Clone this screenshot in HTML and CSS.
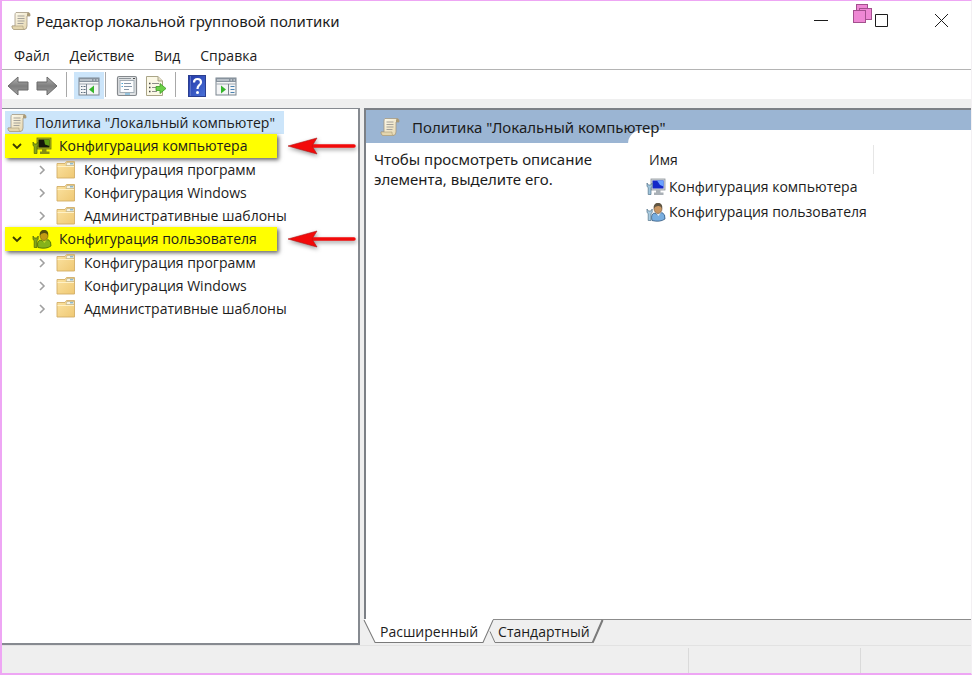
FILE: index.html
```
<!DOCTYPE html>
<html lang="ru">

<head>
    <meta charset="UTF-8">
    <title>Редактор локальной групповой политики</title>
    <link rel="stylesheet" href="styles.css">
</head>

<body>
    <!-- shared icons -->
    <svg class="sprite" aria-hidden="true">
        <defs>
            <linearGradient id="paper" x1="0" y1="0" x2="1" y2="1">
                <stop offset="0" stop-color="#fffdf2" />
                <stop offset="1" stop-color="#e3d3a8" />
            </linearGradient>
            <linearGradient id="gold" x1="0" y1="0" x2="1" y2="1">
                <stop offset="0" stop-color="#fbe3a2" />
                <stop offset="1" stop-color="#efc873" />
            </linearGradient>
            <linearGradient id="metal" x1="0" y1="0" x2="0" y2="1">
                <stop offset="0" stop-color="#b4b4b4" />
                <stop offset="0.5" stop-color="#7e7e7e" />
                <stop offset="1" stop-color="#a2a2a2" />
            </linearGradient>
            <linearGradient id="help" x1="0" y1="0" x2="1" y2="1">
                <stop offset="0" stop-color="#2338a8" />
                <stop offset="1" stop-color="#4a72d8" />
            </linearGradient>
        </defs>
        <symbol id="scroll" viewBox="0 0 20 20">
            <path d="M5 1.500H17.500Q19.500 2 19 5H16V15Q16 18.500 13 18.500H3Q1 18 1 15H4V4Q4 2 5 1.500Z" fill="url(#paper)" stroke="#a39880" stroke-width="0.800" />
            <path d="M16 5V3Q16.500 1.500 17.800 1.600Q19.400 2.300 19 5Z" fill="#a99a78" />
            <path d="M1 15H12Q11.500 18 13.500 18.500H3Q1 18 1 15Z" fill="#e4d6ae" stroke="#a89a78" stroke-width="0.600" />
            <path d="M6.500 5H13.500M6.500 7.500H13.500M6.500 10H13.500M6.500 12.500H12.500" stroke="#a5a29a" />
        </symbol>
        <symbol id="folder" viewBox="0 0 20 18">
            <path d="M1 2.500H9L10.500 0.500H18.500V17H1Z" fill="url(#gold)" stroke="#d2ae66" stroke-width="0.900" />
            <path d="M11 1.500H18V4.500H10Z" fill="#f7f3e4" stroke="#b9ab80" stroke-width="0.600" />
            <path d="M14 2.800H17" stroke="#5f9fc4" />
            <path d="M1.500 5.500H18" stroke="#fff1c6" />
        </symbol>
        <symbol id="computer" viewBox="0 0 20 18">
            <rect x="5" y="1" width="14" height="11" fill="#d6d9dc" stroke="#8b9298" stroke-width="0.800" />
            <rect x="6.500" y="2.500" width="11" height="8" fill="#1428c8" />
            <path d="M11 2.500H17.500V8.500L14 7Z" fill="#6aa2ff" />
            <path d="M10 12H14.500V14.500H17.500V17H8V14.500H10Z" fill="#a9b0b6" />
            <path d="M1 5V8.500L2.200 9.500V16.500H5V9.500L6.200 8.500V5L4.800 7H2.400Z" fill="#9fc4dc" stroke="#54748a" stroke-width="0.700" />
        </symbol>
        <symbol id="user" viewBox="0 0 20 20">
            <path d="M6 18.500Q4.500 12.500 8 11L12 12.500L16 10.500Q19.500 12 19 17Q14 20.500 6 18.500Z" fill="#78aee0" stroke="#35597e" stroke-width="0.800" />
            <path d="M9 10L12.500 14L15.500 10Z" fill="#e8f1f8" />
            <ellipse cx="12" cy="6.500" rx="4" ry="5" fill="#c99763" stroke="#6c4d30" stroke-width="0.600" />
            <path d="M7.800 6.500Q7.200 1 12 1Q17 1 16 6.500Q15.300 3.900 12.500 4Q9 3.800 7.800 6.500Z" fill="#5f5543" />
            <path d="M1 7V10.500L2.200 11.500V18.500H5V11.500L6.200 10.500V7L4.800 9H2.400Z" fill="#a9cbe0" stroke="#54748a" stroke-width="0.700" />
        </symbol>
        <symbol id="computer-green" viewBox="0 0 20 18">
            <rect x="5" y="1" width="14" height="11" fill="#a9b21b" stroke="#6d7410" stroke-width="0.800" />
            <rect x="6.500" y="2.500" width="11" height="8" fill="#14180a" />
            <path d="M12 2.500H17.500V9L13 7.500Z" fill="#5d9c12" />
            <path d="M10 12H14.500V14.500H17.500V17H8V14.500H10Z" fill="#858d12" />
            <path d="M1 5V8.500L2.200 9.500V16.500H5V9.500L6.200 8.500V5L4.800 7H2.400Z" fill="#84a51a" stroke="#4c6408" stroke-width="0.700" />
        </symbol>
        <symbol id="user-green" viewBox="0 0 20 20">
            <path d="M6 18.500Q4.500 12.500 8 11L12 12.500L16 10.500Q19.500 12 19 17Q14 20.500 6 18.500Z" fill="#85b21b" stroke="#476508" stroke-width="0.800" />
            <path d="M9 10L12.500 14L15.500 10Z" fill="#c6dc2a" />
            <ellipse cx="12" cy="6.500" rx="4" ry="5" fill="#c29a14" stroke="#66560a" stroke-width="0.600" />
            <path d="M7.800 6.500Q7.200 1 12 1Q17 1 16 6.500Q15.300 3.900 12.500 4Q9 3.800 7.800 6.500Z" fill="#55500c" />
            <path d="M1 7V10.500L2.200 11.500V18.500H5V11.500L6.200 10.500V7L4.800 9H2.400Z" fill="#84a51a" stroke="#4c6408" stroke-width="0.700" />
        </symbol>
        <symbol id="chevron" viewBox="0 0 10 10">
            <path d="M3 1L7 5L3 9" fill="none" stroke="#a0a0a0" stroke-width="1.600" />
        </symbol>
        <symbol id="chevron-down" viewBox="0 0 10 10">
            <path d="M1 3L5 7L9 3" fill="none" stroke="#3c3c00" stroke-width="1.800" />
        </symbol>
        <symbol id="arrow" viewBox="0 0 68 20">
            <path d="M24 10H66" stroke="#f20a0a" stroke-width="3.500" stroke-linecap="round" />
            <path d="M0 10L29 2L24 10L29 18Z" fill="#f20a0a" stroke="#b01818" stroke-width="0.600" />
        </symbol>
    </svg>

    <div class="window">
        <header class="titlebar">
            <svg class="icon"><use href="#scroll" /></svg>
            <h1>Редактор локальной групповой политики</h1>
            <div class="controls">
                <button type="button" aria-label="Свернуть">
                    <svg viewBox="0 0 14 14"><path d="M0 6.500H14" /></svg>
                </button>
                <button type="button" aria-label="Развернуть">
                    <svg viewBox="0 0 14 14"><path d="M1.500 0.500H13.500V12.500H1.500Z" /></svg>
                </button>
                <button type="button" aria-label="Закрыть">
                    <svg viewBox="0 0 14 14"><path d="M1 0L14 13M14 0L1 13" /></svg>
                </button>
            </div>
            <svg class="badge" viewBox="0 0 20 20">
                <g fill="#ee88d4" stroke="#a3508e">
                    <rect x="3.500" y="0.500" width="11" height="10" />
                    <rect x="6.500" y="4.500" width="12" height="11" />
                    <rect x="0.500" y="6.500" width="12" height="12" />
                </g>
            </svg>
        </header>

        <nav class="menu">
            <button type="button">Файл</button>
            <button type="button">Действие</button>
            <button type="button">Вид</button>
            <button type="button">Справка</button>
        </nav>

        <div class="toolbar">
            <button type="button" aria-label="Назад">
                <svg viewBox="0 0 22 22"><path d="M1 11L11 2V7H21V15H11V20Z" fill="url(#metal)" stroke="#6b6b6b" /></svg>
            </button>
            <button type="button" aria-label="Вперед">
                <svg viewBox="0 0 22 22"><path d="M21 11L11 2V7H1V15H11V20Z" fill="url(#metal)" stroke="#6b6b6b" /></svg>
            </button>
            <span class="divider"></span>
            <button type="button" class="pressed" aria-label="Дерево консоли">
                <svg viewBox="0 0 22 22">
                    <rect x="1" y="3" width="20" height="17" fill="#f4f5f6" stroke="#7b858f" />
                    <path d="M1 3H21V7H1Z" fill="#87929d" />
                    <path d="M2 5H14M15.500 5H17M18.500 5H20" stroke="#e8edf1" />
                    <path d="M1 9H21" stroke="#a0a8b0" />
                    <path d="M8.500 9V20" stroke="#7b858f" />
                    <path d="M3 11.500H4.500M3 14.500H4.500M3 17.500H4.500M5.500 11.500H7.500M5.500 14.500H7.500M5.500 17.500H7.500" stroke="#5d6d7d" />
                    <path d="M11 14.500L16 10.500V18.500Z" fill="#36b52c" />
                </svg>
            </button>
            <span class="divider"></span>
            <button type="button" class="after" aria-label="Свойства">
                <svg viewBox="0 0 22 22">
                    <rect x="1.500" y="1.500" width="19" height="19" rx="1.500" fill="#dfe2e4" stroke="#85898d" stroke-width="1.200" />
                    <path d="M3 3.500H15" stroke="#8e959b" />
                    <path d="M17 3.500H19" stroke="#4c4c4c" />
                    <rect x="4" y="5.500" width="14" height="12" fill="#fcfdfe" stroke="#a3adb5" />
                    <path d="M8 8.500H15M8 11.500H16M8 14.500H13" stroke="#8596a8" />
                    <path d="M5.500 8.500H7M5.500 11.500H7M9 19H14" stroke="#4ba5d8" />
                </svg>
            </button>
            <button type="button" aria-label="Экспорт списка">
                <svg viewBox="0 0 22 22">
                    <path d="M1.500 1.500H13L17.500 6V20.500H1.500Z" fill="#fbf8e6" stroke="#aaa588" />
                    <path d="M13 1.500V6H17.500" fill="#e4dfc4" stroke="#aaa588" />
                    <path d="M4 8.500H5.500M4 12.500H5.500M4 16.500H5.500" stroke="#444" stroke-width="1.400" />
                    <path d="M7 8.500H14M7 12.500H12M7 16.500H12" stroke="#8d8d88" />
                    <path d="M11 11.500H15V8.500L21 13.500L15 18.500V15.500H11Z" fill="#6bd047" stroke="#3c9c22" stroke-width="0.800" />
                </svg>
            </button>
            <span class="divider"></span>
            <button type="button" class="after" aria-label="Справка">
                <svg viewBox="0 0 22 22">
                    <rect x="2.500" y="0.500" width="17" height="21" fill="url(#help)" stroke="#2b3f90" />
                    <path d="M4.500 1V21" stroke="#5c74c8" />
                    <path d="M8 7.500Q8 4 11.500 4Q15 4 15 7.200Q15 9 13 10.300Q11.500 11.500 11.500 14" fill="none" stroke="#fff" stroke-width="2.200" />
                    <circle cx="11.500" cy="17.500" r="1.500" fill="#fff" />
                </svg>
            </button>
            <button type="button" aria-label="Панель действий">
                <svg viewBox="0 0 22 22">
                    <rect x="1" y="3" width="20" height="17" fill="#f4f5f6" stroke="#7b858f" />
                    <path d="M1 3H21V7H1Z" fill="#87929d" />
                    <path d="M2 5H14M15.500 5H17M18.500 5H20" stroke="#e8edf1" />
                    <path d="M1 9H21" stroke="#a0a8b0" />
                    <path d="M13.500 9V20" stroke="#7b858f" />
                    <path d="M15.500 11.500H19.500M15.500 14.500H19.500M15.500 17.500H19.500" stroke="#4c83b0" />
                    <path d="M11 14.500L6 10.500V18.500Z" fill="#36b52c" />
                </svg>
            </button>
        </div>

        <main class="panes">
            <ul class="tree">
                <li class="root"><svg class="icon"><use href="#scroll" /></svg>Политика "Локальный компьютер"</li>
                <li class="branch">
                    <span class="marked"><svg class="twisty"><use href="#chevron-down" /></svg><svg class="icon"><use href="#computer-green" /></svg>Конфигурация компьютера</span>
                    <svg class="arrow"><use href="#arrow" /></svg>
                </li>
                <li class="leaf"><svg class="twisty"><use href="#chevron" /></svg><svg class="icon"><use href="#folder" /></svg>Конфигурация программ</li>
                <li class="leaf"><svg class="twisty"><use href="#chevron" /></svg><svg class="icon"><use href="#folder" /></svg>Конфигурация Windows</li>
                <li class="leaf"><svg class="twisty"><use href="#chevron" /></svg><svg class="icon"><use href="#folder" /></svg>Административные шаблоны</li>
                <li class="branch">
                    <span class="marked"><svg class="twisty"><use href="#chevron-down" /></svg><svg class="icon"><use href="#user-green" /></svg>Конфигурация пользователя</span>
                    <svg class="arrow"><use href="#arrow" /></svg>
                </li>
                <li class="leaf"><svg class="twisty"><use href="#chevron" /></svg><svg class="icon"><use href="#folder" /></svg>Конфигурация программ</li>
                <li class="leaf"><svg class="twisty"><use href="#chevron" /></svg><svg class="icon"><use href="#folder" /></svg>Конфигурация Windows</li>
                <li class="leaf"><svg class="twisty"><use href="#chevron" /></svg><svg class="icon"><use href="#folder" /></svg>Административные шаблоны</li>
            </ul>

            <section class="details">
                <div class="view">
                    <div class="caption">
                        <svg class="icon"><use href="#scroll" /></svg>
                        <h2>Политика "Локальный компьютер"</h2>
                    </div>
                    <div class="content">
                        <p class="hint">Чтобы просмотреть описание элемента, выделите его.</p>
                        <div class="list">
                            <div class="column">Имя</div>
                            <ul>
                                <li><svg class="icon"><use href="#computer" /></svg>Конфигурация компьютера</li>
                                <li><svg class="icon"><use href="#user" /></svg>Конфигурация пользователя</li>
                            </ul>
                        </div>
                    </div>
                </div>
                <div class="tabs">
                    <button type="button" class="tab active">
                        <svg viewBox="0 0 128 24" preserveAspectRatio="none"><path d="M0 0L11 23.500H118L128 0" fill="#fff" stroke="#7a7a7a" /></svg>
                        <span>Расширенный</span>
                    </button>
                    <button type="button" class="tab">
                        <svg viewBox="0 0 112 24" preserveAspectRatio="none"><path d="M-3 12L2 23.500H101L111 0" fill="none" stroke="#7a7a7a" /><path d="M101 23.500L111 0" stroke="#7a7a7a" stroke-width="2" /></svg>
                        <span>Стандартный</span>
                    </button>
                </div>
            </section>
        </main>

        <footer class="status">
            <span></span>
            <span></span>
            <span></span>
        </footer>
    </div>
</body>

</html>
```
FILE: styles.css
```
* {
    box-sizing: border-box;
}

body {
    margin: 0;
    font-family: "Open Sans", "Noto Sans", sans-serif;
    font-size: 14px;
    line-height: 20px;
    color: #1c1c1c;
    background-color: #ffffff;
}

h1,
h2,
p,
ul {
    margin: 0;
    padding: 0;
    font-weight: normal;
    list-style: none;
}

h1,
h2,
.hint {
    font-family: "Noto Sans", "Open Sans", sans-serif;
    font-size: 15px;
}

button {
    padding: 0;
    border: none;
    background: none;
    font: inherit;
    color: inherit;
}

.sprite {
    position: absolute;
    width: 0;
    height: 0;
}

.window {
    display: flex;
    flex-direction: column;
    height: 100vh;
    border: 1px solid #eea6f4;
    border-left-width: 2px;
    border-right-color: #f3f0f3;
    border-bottom-width: 2px;
}

.icon {
    flex: none;
    width: 20px;
    height: 20px;
}

/* title bar */
.titlebar {
    position: relative;
    display: flex;
    align-items: center;
    height: 40px;
    padding-left: 9px;
}

.titlebar h1 {
    flex: 1;
    padding-left: 5px;
}

.controls {
    display: flex;
}

.controls button {
    width: 60px;
    height: 38px;
}

.controls svg {
    display: block;
    width: 14px;
    height: 14px;
    margin: 0 auto;
    overflow: visible;
    fill: none;
    stroke: #1c1c1c;
}

.badge {
    position: absolute;
    top: 3px;
    right: 98px;
    width: 20px;
    height: 20px;
}

/* menu and toolbar */
.menu {
    display: flex;
    gap: 20px;
    height: 29px;
    padding: 1px 12px 0;
    border-bottom: 1px solid #b4b4b4;
}

.toolbar {
    display: flex;
    align-items: center;
    height: 29px;
    padding: 2px 5px 0;
}

.toolbar button {
    width: 29px;
    height: 27px;
}

.toolbar svg {
    display: block;
    width: 22px;
    height: 22px;
}

.toolbar .pressed {
    width: 30px;
    margin-left: 7px;
    padding-left: 4px;
    background-color: #cce5fa;
}

.toolbar .after {
    margin-left: 10px;
}

.divider {
    align-self: stretch;
    width: 2px;
    margin-bottom: 2px;
    border-right: 1px solid #a8a8a8;
}

/* panes */
.panes {
    flex: 1;
    display: flex;
    gap: 4px;
    padding-top: 9px;
    background-color: #efefef;
}

.tree {
    width: 358px;
    padding: 2px 0 0 3px;
    border: solid #868a90;
    border-width: 1px 2px 2px 0;
    background-color: #ffffff;
}

.tree li,
.marked {
    display: flex;
    align-items: center;
    height: 23px;
}

.tree .icon {
    margin-right: 8px;
}

.twisty {
    flex: none;
    width: 10px;
    height: 10px;
}

.tree .root {
    width: 279px;
    padding-left: 2px;
    background-color: #cce5fa;
}

.tree .branch {
    gap: 11px;
    height: 24px;
}

.marked {
    width: 272px;
    height: 24px;
    padding-left: 7px;
    background-color: #ffff00;
    box-shadow: 2px 2px 4px rgba(0, 0, 0, 0.6);
}

.marked .icon {
    margin: 0 7px 0 10px;
}

.arrow {
    width: 68px;
    height: 20px;
    filter: drop-shadow(1px 2px 2px rgba(0, 0, 0, 0.4));
}

.leaf {
    padding-left: 32px;
}

.leaf .icon {
    margin-left: 9px;
}

.details {
    flex: 1;
    display: flex;
    flex-direction: column;
}

.view {
    flex: 1;
    display: flex;
    flex-direction: column;
    border: solid #7c8086;
    border-width: 2px 0 0 2px;
    background-color: #ffffff;
}

.caption {
    display: flex;
    align-items: center;
    gap: 12px;
    height: 33px;
    padding-left: 14px;
    background-color: #9bb5d3;
}

/* the title stays above the corner of the list */
.caption h2 {
    position: relative;
}

.content {
    flex: 1;
    display: flex;
}

.hint {
    width: 262px;
    padding: 6px 30px 0 8px;
}

.list {
    flex: 1;
    margin-top: -13px;
    padding: 15px 0 0 18px;
    border-top-left-radius: 14px;
    background-color: #ffffff;
}

.column {
    width: 228px;
    height: 29px;
    padding: 5px 3px;
    border-right: 1px solid #e6e6e6;
}

.list li {
    display: flex;
    align-items: center;
    gap: 3px;
    height: 25px;
}

/* tabs under the list */
.tabs {
    display: flex;
    height: 26px;
    padding-bottom: 2px;
}

.tab {
    position: relative;
    padding: 0 14px 0 5px;
    border-top: 1px solid #8c8c8c;
}

.tab.active {
    padding: 0 15px 0 16px;
    border-top-color: #ffffff;
}

.tab svg {
    position: absolute;
    top: 0;
    left: 0;
    width: 100%;
    height: 100%;
    overflow: visible;
}

.tab span {
    position: relative;
}

.tabs::after {
    content: "";
    flex: 1;
    border-top: 1px solid #8c8c8c;
}

/* status bar */
.status {
    display: flex;
    height: 28px;
    padding-top: 2px;
    border-top: 1px solid #e2e2e2;
    background-color: #efefef;
}

.status span {
    width: 172px;
    border-right: 1px solid #dadada;
}

.status span:first-child {
    flex: 1;
}

.status span:last-child {
    width: 110px;
    border-right: none;
}
```
